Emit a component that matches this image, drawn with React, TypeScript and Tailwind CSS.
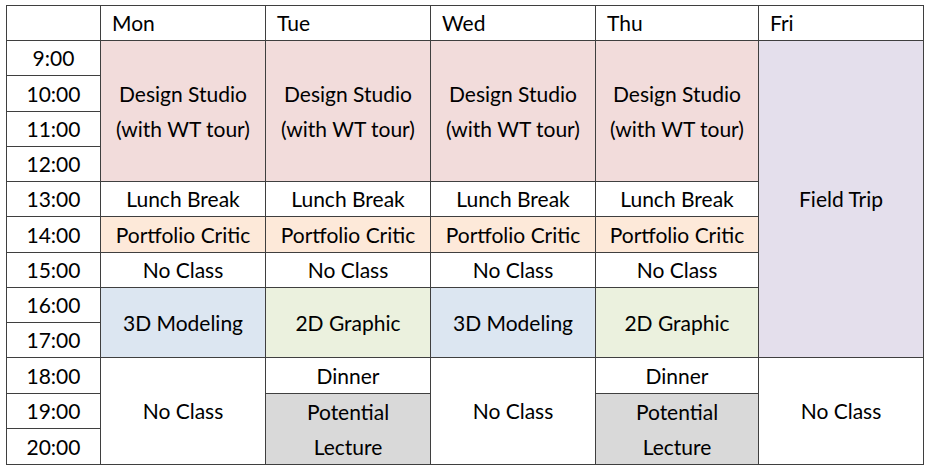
import React from "react";

const times = ["9:00", "10:00", "11:00", "12:00", "13:00", "14:00", "15:00", "16:00", "17:00", "18:00", "19:00", "20:00"];

const cell = "border border-[#3f3f3f] text-center align-middle p-0";

function Design() {
  return (
    <td rowSpan={4} className={`${cell} bg-[#f2dcdb]`}>
      <div className="leading-[35px]">Design Studio</div>
      <div className="leading-[35px]">(with WT tour)</div>
    </td>
  );
}

function Lecture() {
  return (
    <td rowSpan={2} className={`${cell} bg-[#d9d9d9]`}>
      <div className="leading-[35px]">Potential</div>
      <div className="leading-[35px]">Lecture</div>
    </td>
  );
}

export default function App() {
  const days = ["Mon", "Tue", "Wed", "Thu"];
  return (
    <div className="w-[936px] h-[466px] bg-white pt-[5px] pl-[6px] text-black text-[21px]" style={{ fontFamily: "Lato, 'Open Sans', sans-serif" }}>
      <table className="border-collapse table-fixed w-[917px]">
        <colgroup>
          <col className="w-[94px]" />
          <col className="w-[165px]" />
          <col className="w-[165px]" />
          <col className="w-[165px]" />
          <col className="w-[163px]" />
          <col className="w-[165px]" />
        </colgroup>
        <tbody>
          {/* header */}
          <tr className="h-[35px]">
            <td className={cell}></td>
            {[...days, "Fri"].map((d) => (
              <td key={d} className={`${cell} text-left pl-[11px]`}>{d}</td>
            ))}
          </tr>
          {times.map((t, i) => (
            <tr key={t} className="h-[35.25px]">
              <td className={cell}>{t}</td>
              {i === 0 && (
                <>
                  <Design />
                  <Design />
                  <Design />
                  <Design />
                  <td rowSpan={9} className={`${cell} bg-[#e4dfec]`}>Field Trip</td>
                </>
              )}
              {i === 4 && days.map((d) => <td key={d} className={cell}>Lunch Break</td>)}
              {i === 5 && days.map((d) => <td key={d} className={`${cell} bg-[#fde9d9]`}>Portfolio Critic</td>)}
              {i === 6 && days.map((d) => <td key={d} className={cell}>No Class</td>)}
              {i === 7 && (
                <>
                  <td rowSpan={2} className={`${cell} bg-[#dce6f1]`}>3D Modeling</td>
                  <td rowSpan={2} className={`${cell} bg-[#ebf1de]`}>2D Graphic</td>
                  <td rowSpan={2} className={`${cell} bg-[#dce6f1]`}>3D Modeling</td>
                  <td rowSpan={2} className={`${cell} bg-[#ebf1de]`}>2D Graphic</td>
                </>
              )}
              {i === 9 && (
                <>
                  <td rowSpan={3} className={cell}>No Class</td>
                  <td className={cell}>Dinner</td>
                  <td rowSpan={3} className={cell}>No Class</td>
                  <td className={cell}>Dinner</td>
                  <td rowSpan={3} className={cell}>No Class</td>
                </>
              )}
              {i === 10 && (
                <>
                  <Lecture />
                  <Lecture />
                </>
              )}
            </tr>
          ))}
        </tbody>
      </table>
    </div>
  );
}
